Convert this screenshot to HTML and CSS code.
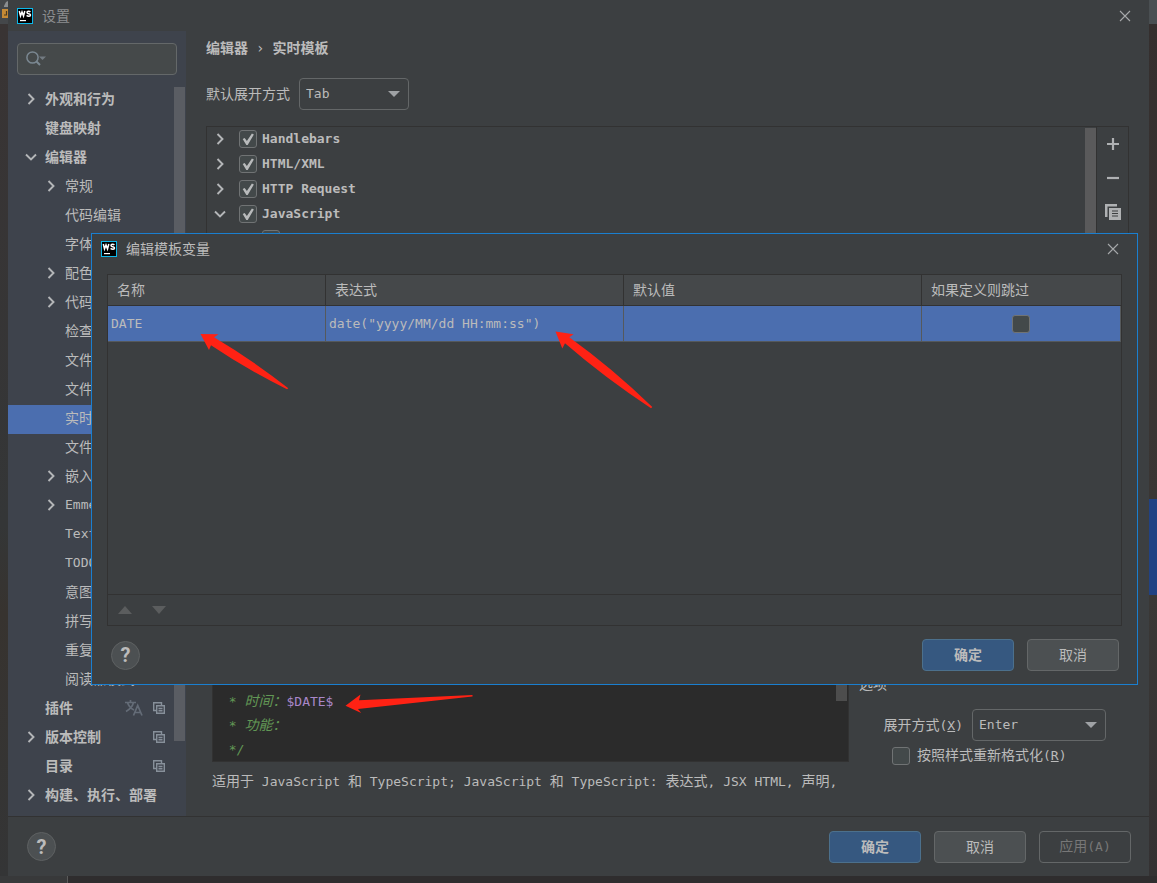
FILE: index.html
```html
<!DOCTYPE html>
<html lang="zh-CN">
<head>
<meta charset="utf-8">
<title>设置</title>
<link rel="stylesheet" href="styles.css">
</head>
<body>
<svg class="defs" aria-hidden="true">
  <symbol id="right" viewBox="0 0 16 16"><path d="M5.500 3 10.500 8l-5 5" fill="none" stroke="currentColor" stroke-width="1.900"/></symbol>
  <symbol id="down" viewBox="0 0 16 16"><path d="M3 5.500 8 10.500l5-5" fill="none" stroke="currentColor" stroke-width="1.900"/></symbol>
  <symbol id="close" viewBox="0 0 12 12"><path d="M1 1l10 10M11 1 1 11" fill="none" stroke="currentColor" stroke-width="1.100"/></symbol>
  <symbol id="caret" viewBox="0 0 12 6"><path d="M0 0h12L6 6z" fill="currentColor"/></symbol>
  <symbol id="scope" viewBox="0 0 12 12"><path d="M3 8.500H.7V.7h7.800V3M3.700 3.700h7.600v7.600H3.700zM5.500 6.500h4M5.500 8.700h4" fill="none" stroke="currentColor" stroke-width="1.400"/></symbol>
  <symbol id="ws" viewBox="0 0 16 16"><path d="M0 0h16v16H0z" fill="#0cb8ea"/><path d="M1 1h14v14H1z" fill="#000"/><path d="M2.300 3l1.200 5L5 4l1.500 4L7.800 3M13.400 3.900C12.500 3 10 3 10 4.500s3.500 1 3.500 2.500-2.700 1.500-3.900.4" fill="none" stroke="#fff" stroke-width="1.500"/><path d="M3 12h6v1.200H3z" fill="#fff"/></symbol>
</svg>

<div class="desktop">
  <div class="edge-left" aria-hidden="true">
    <svg width="8" height="24" viewBox="0 0 8 24"><path d="M4 6 6 2l2-1v6H4z" fill="#8a8d90"/><path d="M2 9h6v9H2z" fill="#c68a35"/><path d="M6.500 11v4H4" fill="none" stroke="#4a3a20" stroke-width="1.200"/></svg>
  </div>

  <main class="window">
    <header class="titlebar">
      <svg class="logo"><use href="#ws"/></svg>
      <h1 class="title">设置</h1>
      <button class="close" aria-label="关闭设置"><svg width="12" height="12"><use href="#close"/></svg></button>
    </header>

    <div class="content">
      <aside class="sidebar">
        <label class="search">
          <svg width="22" height="18" viewBox="0 0 22 18"><circle cx="7.500" cy="7.500" r="5.600" fill="none" stroke="#7b8892" stroke-width="1.500"/><path d="M11.500 11.500 15 15" stroke="#7b8892" stroke-width="2"/><path d="M14 6.500h7L17.500 10z" fill="#737b82"/></svg>
          <input type="search" aria-label="搜索设置">
        </label>
        <div class="treewrap">
          <ul class="tree">
            <li class="node top"><svg class="chev"><use href="#right"/></svg><span>外观和行为</span></li>
            <li class="node top"><i class="chev"></i><span>键盘映射</span></li>
            <li class="node top"><svg class="chev"><use href="#down"/></svg><span>编辑器</span></li>
            <li class="node"><svg class="chev"><use href="#right"/></svg><span>常规</span></li>
            <li class="node"><i class="chev"></i><span>代码编辑</span></li>
            <li class="node"><i class="chev"></i><span>字体</span></li>
            <li class="node"><svg class="chev"><use href="#right"/></svg><span>配色</span></li>
            <li class="node"><svg class="chev"><use href="#right"/></svg><span>代码</span></li>
            <li class="node"><i class="chev"></i><span>检查</span></li>
            <li class="node"><i class="chev"></i><span>文件</span></li>
            <li class="node"><i class="chev"></i><span>文件</span></li>
            <li class="node selected"><i class="chev"></i><span>实时</span></li>
            <li class="node"><i class="chev"></i><span>文件</span></li>
            <li class="node"><svg class="chev"><use href="#right"/></svg><span>嵌入</span></li>
            <li class="node"><svg class="chev"><use href="#right"/></svg><span class="latin">Emmet</span></li>
            <li class="node"><i class="chev"></i><span class="latin">Text</span></li>
            <li class="node"><i class="chev"></i><span class="latin">TODO</span></li>
            <li class="node"><i class="chev"></i><span>意图</span></li>
            <li class="node"><i class="chev"></i><span>拼写</span></li>
            <li class="node"><i class="chev"></i><span>重复</span></li>
            <li class="node"><i class="chev"></i><span>阅读器模式</span></li>
            <li class="node top"><i class="chev"></i><span class="grow">插件</span>
              <svg class="lang" width="18" height="18" viewBox="0 0 18 18" fill="none" stroke="currentColor" stroke-width="1.700"><path d="M0 3.500h11M5.500 1v2.500M2.500 3.500C3.500 7 6 9.500 9 11M8.500 3.500C7.500 7.500 4.500 10.500 1 12.500M8.500 16.500 12.700 6.500l4.300 10M10 13.500h5.500"/></svg>
              <svg class="scope"><use href="#scope"/></svg></li>
            <li class="node top"><svg class="chev"><use href="#right"/></svg><span class="grow">版本控制</span><svg class="scope"><use href="#scope"/></svg></li>
            <li class="node top"><i class="chev"></i><span class="grow">目录</span><svg class="scope"><use href="#scope"/></svg></li>
            <li class="node top"><svg class="chev"><use href="#right"/></svg><span>构建、执行、部署</span></li>
          </ul>
          <div class="thumb tree-thumb"></div>
        </div>
      </aside>

      <section class="panel">
        <nav class="crumbs"><span>编辑器</span><span class="sep">›</span><span>实时模板</span></nav>
        <div class="field">
          <label for="expand">默认展开方式</label>
          <span class="combo combo-small"><select id="expand"><option>Tab</option></select><svg><use href="#caret"/></svg></span>
        </div>

        <div class="templates">
          <ul class="groups">
            <li><svg class="chev"><use href="#right"/></svg><label><input class="check" type="checkbox" checked>Handlebars</label></li>
            <li><svg class="chev"><use href="#right"/></svg><label><input class="check" type="checkbox" checked>HTML/XML</label></li>
            <li><svg class="chev"><use href="#right"/></svg><label><input class="check" type="checkbox" checked>HTTP Request</label></li>
            <li><svg class="chev"><use href="#down"/></svg><label><input class="check" type="checkbox" checked>JavaScript</label></li>
            <li class="leaf"><input class="check" type="checkbox" aria-label="模板"></li>
          </ul>
          <div class="thumb list-thumb"></div>
          <div class="tools">
            <button aria-label="添加"><svg width="16" height="16" viewBox="0 0 16 16"><path d="M2 8h12M8 2v12" stroke="currentColor" stroke-width="2.200"/></svg></button>
            <button aria-label="移除"><svg width="16" height="16" viewBox="0 0 16 16"><path d="M2 8h12" stroke="currentColor" stroke-width="2.200"/></svg></button>
            <button aria-label="复制"><svg width="16" height="16" viewBox="0 0 16 16"><path d="M0 0h12v2.500H2.500V13H0z" fill="currentColor"/><path d="M4 4h12v12H4z" fill="currentColor"/><path d="M7 7h6M7 9.500h6M7 12h6" stroke="#3c3f41" stroke-width="1.200"/></svg></button>
          </div>
        </div>

        <div class="details">
          <div class="source">
            <div class="editor">
              <pre class="code"> * <em>时间：</em><b>$DATE$</b>
 * <em>功能：</em>
 */</pre>
              <div class="thumb editor-thumb"></div>
            </div>
            <p class="applies">适用于<span class="latin"> JavaScript </span>和<span class="latin"> TypeScript; JavaScript </span>和<span class="latin"> TypeScript: </span>表达式<span class="latin">, JSX HTML, </span>声明<span class="latin">,</span></p>
          </div>
          <fieldset class="options">
            <legend>选项</legend>
            <div class="field">
              <label for="key">展开方式<span class="latin">(<u>X</u>)</span></label>
              <span class="combo combo-large"><select id="key"><option>Enter</option></select><svg><use href="#caret"/></svg></span>
            </div>
            <label class="reformat"><input class="check" type="checkbox"><span>按照样式重新格式化<span class="latin">(<u>R</u>)</span></span></label>
          </fieldset>
        </div>
      </section>
    </div>

    <footer class="actions">
      <button class="help" aria-label="帮助">?</button>
      <button class="btn primary">确定</button>
      <button class="btn">取消</button>
      <button class="btn" disabled>应用<span class="latin">(A)</span></button>
    </footer>
  </main>

  <div class="edge-right" aria-hidden="true"></div>
  <div class="edge-bottom" aria-hidden="true"></div>

  <section class="dialog" role="dialog" aria-labelledby="dialog-title">
    <header class="titlebar">
      <svg class="logo"><use href="#ws"/></svg>
      <h2 class="title" id="dialog-title">编辑模板变量</h2>
      <button class="close" aria-label="关闭对话框"><svg width="12" height="12"><use href="#close"/></svg></button>
    </header>
    <div class="tablebox">
      <div class="tablearea">
        <table class="vars">
          <colgroup><col class="col-name"><col><col><col class="col-skip"></colgroup>
          <thead><tr><th>名称</th><th>表达式</th><th>默认值</th><th>如果定义则跳过</th></tr></thead>
          <tbody><tr><td>DATE</td><td>date("yyyy/MM/dd HH:mm:ss")</td><td></td><td class="skip"><input class="check" type="checkbox" aria-label="如果定义则跳过"></td></tr></tbody>
        </table>
      </div>
      <div class="mover">
        <button disabled aria-label="上移"><svg width="14" height="8" viewBox="0 0 14 8"><path d="M0 8h14L7 0z" fill="currentColor"/></svg></button>
        <button disabled aria-label="下移"><svg width="14" height="8" viewBox="0 0 14 8"><path d="M0 0h14L7 8z" fill="currentColor"/></svg></button>
      </div>
    </div>
    <footer class="actions">
      <button class="help" aria-label="帮助">?</button>
      <button class="btn primary">确定</button>
      <button class="btn">取消</button>
    </footer>
  </section>

  <svg class="arrows" width="1157" height="883" viewBox="0 0 1157 883" fill="#ff2214" aria-hidden="true">
    <path d="M200.500 334 218.500 334.300 214 337.300Q254 361 288.300 388.300L287 389.300Q246 369 211 345.300L209 350z"/>
    <path d="M555.500 331.500 573.500 334.300 569.300 337.300Q612 368 652.300 407L651 408.200Q605 378 565 343.300L562.300 348.500z"/>
    <path d="M345.500 705.800 360.500 694.600 359 700.300 472.500 694.900V696.600L358 708.900 361.200 713z"/>
  </svg>
</div>
</body>
</html>
```
FILE: styles.css
```css
* { box-sizing: border-box; }

body {
  margin: 0;
  background: #353433;
  color: #bbbbbb;
  font: 14px/20px "DejaVu Sans Mono", "Noto Sans CJK SC", monospace;
}

h1, h2, p, ul, pre { margin: 0; padding: 0; font: inherit; }
ul { list-style: none; }
button, input, select { font: inherit; color: inherit; margin: 0; }
button { padding: 0; border: 0; background: none; }
svg { display: block; flex: none; }

.defs { position: absolute; width: 0; height: 0; }
.latin { font-size: 13px; white-space: pre; }

.desktop {
  position: relative;
  display: grid;
  grid-template: minmax(0, 1fr) 7px / 8px minmax(0, 1fr) 8px;
  height: 100vh;
  overflow: hidden;
}

.edge-left { background: linear-gradient(#44474a 24px, #393434 24px, #343637 60%, #37332f 70%, #343536); }
.edge-right { background: linear-gradient(#4a4f52 24px, #352f2e 24px, #3a3634 499px, #214283 499px, #214283 595px, #3a3836 595px, #343132); }
.edge-bottom { grid-column: 1 / -1; background: linear-gradient(90deg, #38393a 67px, #5a5a5a 67px, #5a5a5a 68px, #2f2d2e 68px); }

.window {
  display: flex;
  flex-direction: column;
  min-width: 0;
  background: #3c3f41;
}

.titlebar { display: flex; align-items: center; gap: 9px; height: 31px; padding: 0 18px 0 9px; flex: none; }
.logo { width: 16px; height: 16px; }
.window > .titlebar .title { color: #8c8e90; }
.close { margin-left: auto; color: #a7a9aa; }

.content { display: flex; flex: 1; min-height: 0; border-bottom: 1px solid #323232; }

.sidebar {
  display: flex;
  flex-direction: column;
  gap: 11px;
  width: 178px;
  flex: none;
  padding-top: 12px;
  background: #3e434c;
}

.search {
  display: flex;
  align-items: center;
  height: 32px;
  margin: 0 9px;
  padding-left: 7px;
  border: 1px solid #646869;
  border-radius: 4px;
  background: #45494a;
}
.search input { width: 100%; min-width: 0; border: 0; outline: 0; background: none; appearance: none; }

.treewrap { display: grid; min-height: 0; overflow: hidden; }
.treewrap > * { grid-area: 1 / 1; }
.tree-thumb { justify-self: end; height: 654px; margin: 1px 1px 0 0; }
.thumb { width: 11px; background: #5a5d63; }

.node { display: flex; align-items: center; gap: 6px; height: 29px; padding: 0 21px 4px 35px; white-space: nowrap; }
.node.top { padding-left: 15px; font-weight: bold; }
.node.selected { background: #4b6eaf; }
.chev { width: 16px; height: 16px; flex: none; color: #b4b6b8; }
.grow { flex: 1; }
.scope { width: 12px; height: 12px; color: #87909a; }
.lang { color: #646c77; margin-right: 4px; }

.panel { display: flex; flex-direction: column; flex: 1; min-width: 0; padding: 7px 20px 24px; }
.crumbs { display: flex; gap: 8px; font-weight: bold; }
.sep { font-weight: normal; }
.field { display: flex; align-items: center; gap: 9px; }
.crumbs + .field { margin: 20px 0 16px; }

.combo { display: grid; align-items: center; }
.combo > * { grid-area: 1 / 1; }
.combo select {
  width: 100%;
  height: 32px;
  padding: 0 6px;
  border: 1px solid #646768;
  border-radius: 4px;
  background: #3c3f41;
  font-size: 13px;
  appearance: none;
}
.combo svg { justify-self: end; width: 12px; height: 6px; margin-right: 9px; color: #9fa2a5; pointer-events: none; }
.combo-small { width: 110px; }
.combo-large { width: 134px; }

.templates { display: flex; flex: 1; min-height: 0; overflow: hidden; border: 1px solid #323232; }
.groups { flex: 1; font-weight: bold; font-size: 13px; }
.groups li { display: flex; align-items: center; gap: 11px; height: 25px; padding: 0 0 1px 5px; }
.groups label { display: flex; align-items: center; gap: 5px; }
.groups .leaf { padding-left: 55px; }
.list-thumb { margin-top: 1px; background: #5a5a5b; }
.tools { display: flex; flex-direction: column; gap: 18px; width: 32px; padding-top: 9px; border-left: 1px solid #323232; align-items: center; color: #afb1b3; }

.check {
  appearance: none;
  display: grid;
  width: 18px;
  height: 18px;
  flex: none;
  border: 1px solid #707374;
  border-radius: 3px;
  background: #43494a;
}
.check:checked::before {
  content: "";
  margin: 1px;
  background: #b8babb;
  clip-path: polygon(12% 50%, 26% 42%, 42% 64%, 78% 10%, 92% 17%, 48% 92%, 38% 92%);
}

.details { display: flex; align-items: flex-end; gap: 10px; padding: 10px 0 0 6px; }
.source { flex: 1; min-width: 0; }
.editor { display: flex; justify-content: space-between; align-items: flex-start; height: 86px; border: 1px solid #323232; background: #2b2b2b; }
.code { padding: 13px 0 0 8px; color: #629755; font: italic 13px/24px "DejaVu Sans Mono", "Noto Sans CJK SC", monospace; }
.code em { font-size: 14px; line-height: 20px; }
.code b { color: #a987c9; font-weight: normal; font-style: normal; }
.editor-thumb { height: 24px; margin-right: 1px; background: #4d4d4d; }
.applies { padding-top: 9px; overflow: hidden; white-space: nowrap; }

.options { width: 270px; flex: none; margin: 0; padding: 0 0 26px; border: 0; }
.options legend { padding: 0; }
.options .field { justify-content: flex-end; margin: 15px 23px 4px 0; }
.reformat { display: flex; align-items: center; gap: 7px; padding-left: 33px; }

.actions { display: flex; align-items: center; gap: 13px; padding: 0 18px 0 19px; flex: none; }
.window > .actions { height: 59px; }
.help {
  width: 29px;
  height: 29px;
  margin-right: auto;
  border: 1px solid #5e6162;
  border-radius: 50%;
  background: #4c5052;
  font: bold 20px/26px Roboto, sans-serif;
}
.btn { width: 92px; height: 32px; border: 1px solid #646768; border-radius: 4px; background: #4c5052; }
.btn.primary { border-color: #4c708c; background: #365880; font-weight: bold; }
.btn:disabled { background: none; color: #777777; }

.dialog {
  position: absolute;
  inset: 233px 19px 198px 91px;
  display: flex;
  flex-direction: column;
  border: 1px solid #1a7fd0;
  background: #3c3f41;
}
.dialog > .titlebar { height: 29px; }
.tablebox { display: flex; flex-direction: column; flex: 1; margin: 11px 15px 0; border: 1px solid #323232; }
.tablearea { flex: 1; }
.vars { width: 100%; table-layout: fixed; border-collapse: separate; border-spacing: 0; }
.col-name { width: 218px; }
.col-skip { width: 199px; }
.vars th { height: 31px; padding: 0 9px; border-right: 1px solid #323232; border-bottom: 1px solid #323232; background: #45484a; text-align: left; font-weight: normal; }
.vars td { height: 36px; padding: 0 3px; border-right: 1px solid #55595c; border-bottom: 1px solid #55595c; background: #4b6eaf; font-size: 13px; white-space: nowrap; }
.vars th:last-child { border-right: 0; }
.vars .skip .check { margin: 0 auto; }
.mover { display: flex; align-items: center; gap: 20px; height: 31px; padding-left: 10px; border-top: 1px solid #323232; color: #5b5d5e; }
.dialog > .actions { height: 58px; }

.arrows { position: absolute; top: 0; left: 0; pointer-events: none; }
```
